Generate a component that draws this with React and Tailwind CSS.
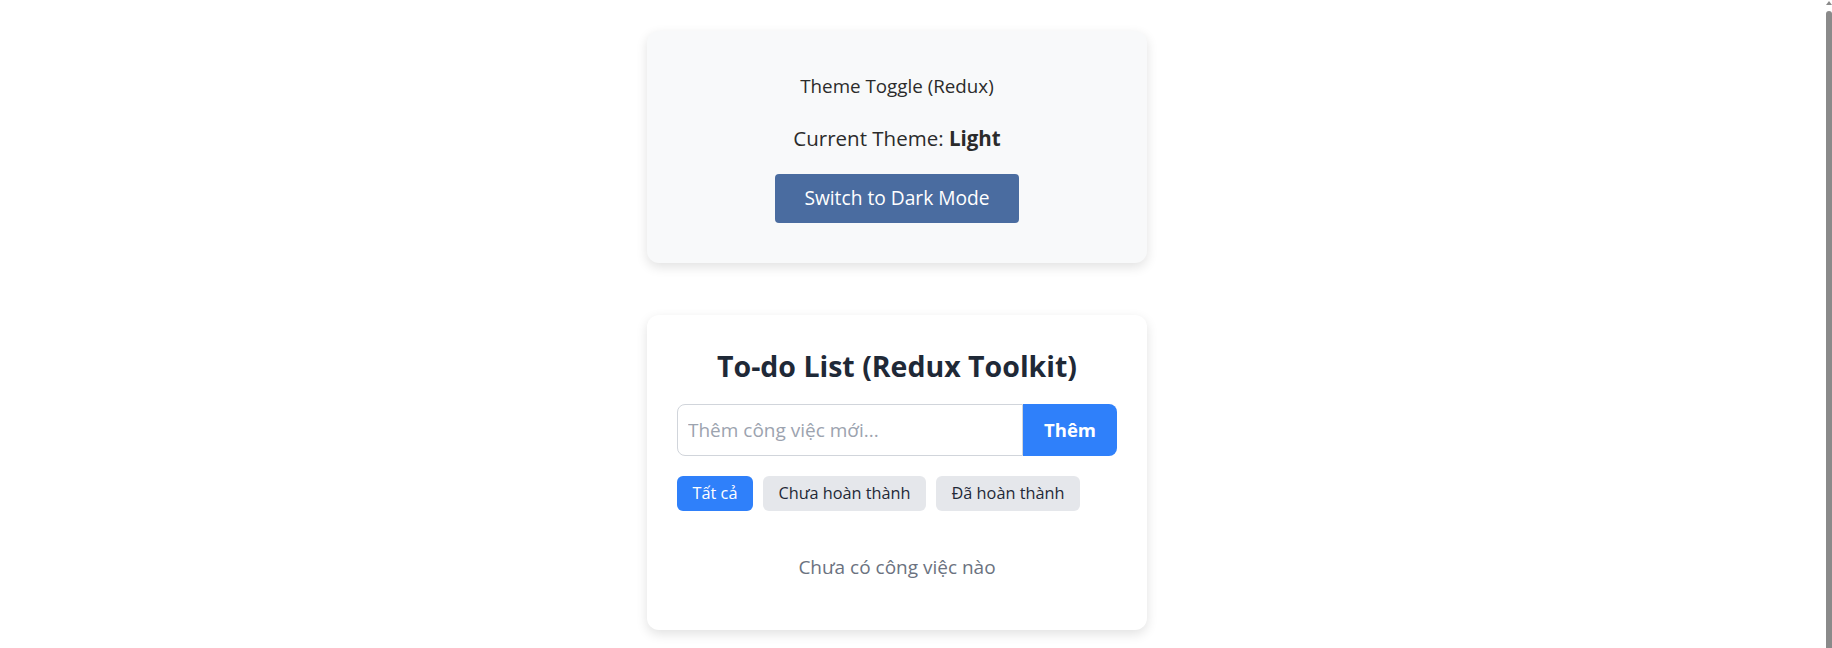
import { useState } from "react";

const FONT = { fontFamily: '"Open Sans", "Noto Sans", sans-serif' };

function ThemeCard({ dark, onToggle }) {
  return (
    <div className="w-[500px] rounded-xl bg-[#f8f9fa] text-center px-[30px] pt-[42px] pb-[40px] shadow-[0_4px_12px_rgba(0,0,0,0.12)]">
      <h3 className="text-[18.8px] leading-[27px] text-[#2b2b2b]">Theme Toggle (Redux)</h3>
      <p className="mt-[23px] text-[20.5px] leading-[30px] text-[#2b2b2b]">
        Current Theme: <strong className="font-bold">{dark ? "Dark" : "Light"}</strong>
      </p>
      <button
        onClick={onToggle}
        className="mt-[21px] h-[49px] w-[244px] rounded-[4px] bg-[#4a6ca0] text-[19.2px] text-white"
      >
        Switch to {dark ? "Light" : "Dark"} Mode
      </button>
    </div>
  );
}

function TodoCard() {
  const [filter, setFilter] = useState("all");
  const filters = [
    { key: "all", label: "Tất cả", w: "w-[76px]" },
    { key: "active", label: "Chưa hoàn thành", w: "w-[163px]" },
    { key: "done", label: "Đã hoàn thành", w: "w-[144px]" },
  ];

  return (
    <div className="w-[500px] rounded-xl bg-white px-[30px] pt-[33px] pb-[49px] text-center shadow-[0_4px_12px_rgba(0,0,0,0.12)]">
      <h2 className="text-[28.5px] leading-[36px] font-bold text-[#1f2937]">To-do List (Redux Toolkit)</h2>

      <div className="mt-[20px] flex h-[52px]">
        <input
          placeholder="Thêm công việc mới..."
          className="flex-1 min-w-0 rounded-l-lg border border-[#d1d5db] px-[10px] text-[19px] text-[#1f2937] placeholder:text-[#9ca3af] outline-none"
        />
        <button className="w-[94px] rounded-r-lg bg-[#2f80fa] text-[18.5px] font-bold text-white">Thêm</button>
      </div>

      <div className="mt-[20px] flex gap-[10px]">
        {filters.map((f) => (
          <button
            key={f.key}
            onClick={() => setFilter(f.key)}
            className={`h-[35px] ${f.w} rounded-md text-[16.3px] ${
              filter === f.key ? "bg-[#2f80fa] text-white" : "bg-[#e5e7eb] text-[#1f2937]"
            }`}
          >
            {f.label}
          </button>
        ))}
      </div>

      <p className="mt-[43px] text-[19px] leading-[27px] text-[#6b7280]">Chưa có công việc nào</p>
    </div>
  );
}

export default function App() {
  const [dark, setDark] = useState(false);

  return (
    <div className="relative h-[648px] overflow-hidden bg-white" style={FONT}>
      <div className="flex flex-col gap-[52px] pl-[647px] pt-[31px]">
        <ThemeCard dark={dark} onToggle={() => setDark(!dark)} />
        <TodoCard />
      </div>

      {/* fake scrollbar */}
      <div className="absolute right-0 top-0 h-full w-[6px]">
        <div className="mx-auto mt-[1px] h-0 w-0 border-x-[3px] border-b-[4px] border-x-transparent border-b-[#8a8a8a]" />
        <div className="mt-[6px] h-full rounded-t-sm bg-[#8a8a8a]" />
      </div>
    </div>
  );
}
